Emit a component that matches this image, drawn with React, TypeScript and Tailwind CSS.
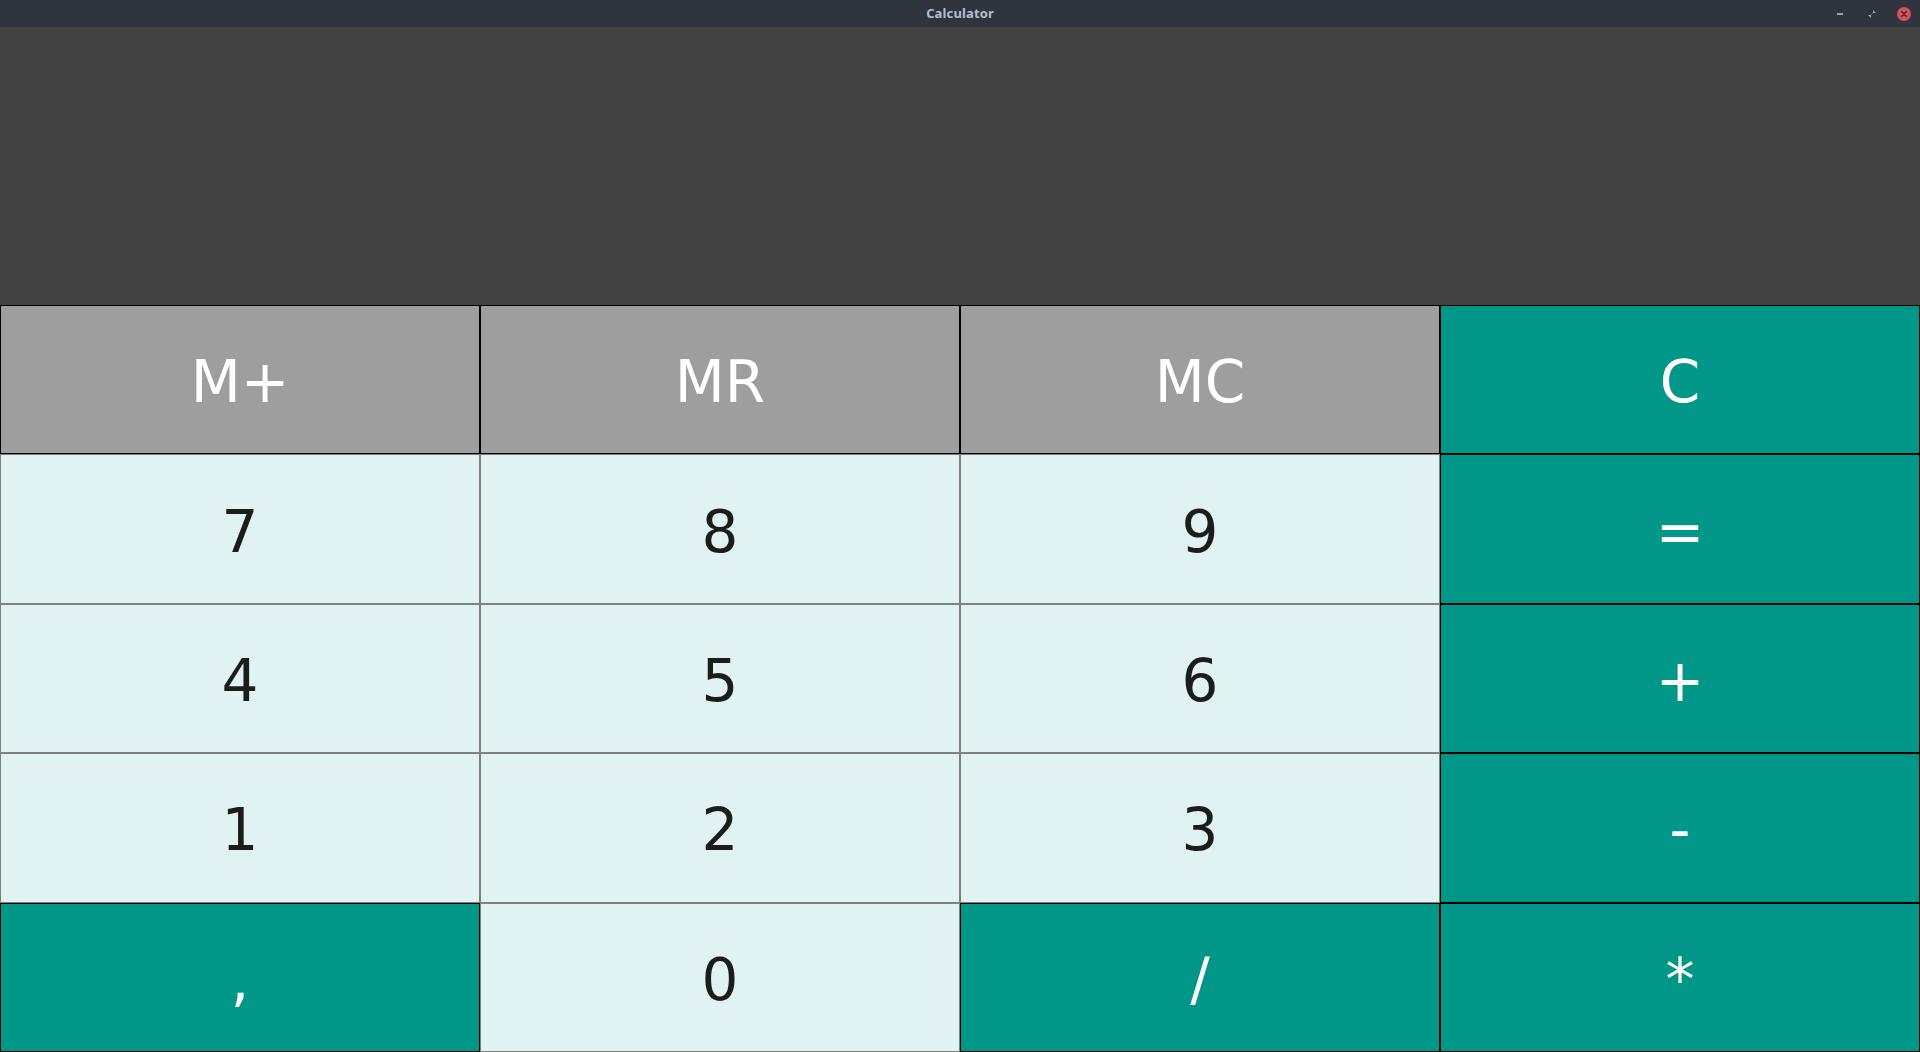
import React from 'react';

type Kind = 'mem' | 'num' | 'op';

interface Key {
  label: string;
  kind: Kind;
}

const KEYS: Key[] = [
  { label: 'M+', kind: 'mem' },
  { label: 'MR', kind: 'mem' },
  { label: 'MC', kind: 'mem' },
  { label: 'C', kind: 'op' },
  { label: '7', kind: 'num' },
  { label: '8', kind: 'num' },
  { label: '9', kind: 'num' },
  { label: '=', kind: 'op' },
  { label: '4', kind: 'num' },
  { label: '5', kind: 'num' },
  { label: '6', kind: 'num' },
  { label: '+', kind: 'op' },
  { label: '1', kind: 'num' },
  { label: '2', kind: 'num' },
  { label: '3', kind: 'num' },
  { label: '-', kind: 'op' },
  { label: ',', kind: 'op' },
  { label: '0', kind: 'num' },
  { label: '/', kind: 'op' },
  { label: '*', kind: 'op' },
];

const kindClass: Record<Kind, string> = {
  mem: 'bg-[#9e9e9e] border-black text-white',
  num: 'bg-[#e0f2f1] border-[#7f7f7f] text-[#1c1c1c]',
  op: 'bg-[#009688] border-black text-white',
};

const TitleBar: React.FC = () => (
  <div className="relative h-[27px] flex-shrink-0 bg-[#2f343f] flex items-center justify-center">
    <span className="text-[13px] font-bold text-[#b4bfce] tracking-[0.01em]" style={{ fontFamily: '"Noto Sans", sans-serif' }}>
      Calculator
    </span>
    {/* window controls */}
    <div className="absolute right-[9px] top-0 h-full flex items-center">
      <div className="w-[6px] h-[2px] bg-[#9aa3b0] mr-[24px]" />
      <svg width="10" height="10" viewBox="0 0 10 10" className="mt-[1px] mr-[20px]">
        <path d="M6 1 L6 4 L9 4 Z" fill="#9aa3b0" />
        <path d="M4 9 L4 6 L1 6 Z" fill="#9aa3b0" />
        <path d="M5.5 4.5 L4.5 5.5" stroke="#9aa3b0" strokeWidth="1" />
      </svg>
      <div className="w-[14px] h-[14px] rounded-full bg-[#d9525b] flex items-center justify-center">
        <svg width="8" height="8" viewBox="0 0 8 8">
          <path d="M1.5 1.5 L6.5 6.5 M6.5 1.5 L1.5 6.5" stroke="#2f343f" strokeWidth="1.6" strokeLinecap="round" />
        </svg>
      </div>
    </div>
  </div>
);

export default function App() {
  return (
    <div className="w-screen h-screen flex flex-col overflow-hidden bg-[#424242]">
      <TitleBar />

      {/* Display */}
      <div className="h-[278px] flex-shrink-0 bg-[#424242]" />

      {/* Keypad */}
      <div
        className="flex-1 grid grid-cols-4 grid-rows-5"
        style={{ fontFamily: '"DejaVu Sans", sans-serif' }}
      >
        {KEYS.map((k) => (
          <button
            key={k.label}
            className={`border flex items-center justify-center pt-[5px] text-[58px] leading-none ${kindClass[k.kind]}`}
          >
            {k.label}
          </button>
        ))}
      </div>
    </div>
  );
}
